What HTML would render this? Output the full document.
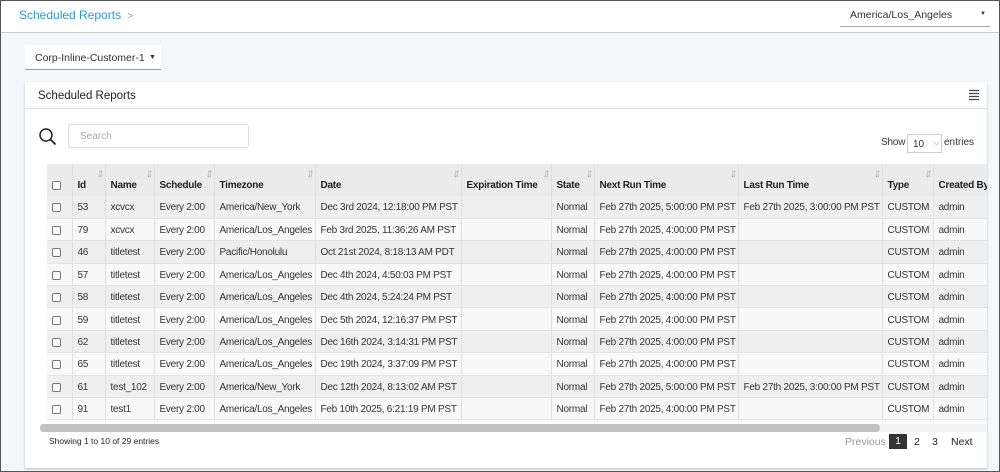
<!DOCTYPE html><html><head><style>
*{box-sizing:border-box;margin:0;padding:0}
body{width:1000px;height:472px;overflow:hidden;background:#f4f7fa;font-family:"Liberation Sans",sans-serif;font-size:11px;color:#333;position:relative}
.frame{position:absolute;inset:0;border:1px solid #555;pointer-events:none;z-index:9}
.top{position:absolute;left:0;top:0;width:1000px;height:33px;background:#fff;border-bottom:1px solid #ccc}
.a{position:absolute}
.card{position:absolute;left:25px;top:82px;width:962px;height:386px;background:#fff;box-shadow:0 1px 2px rgba(0,0,0,.25)}
table{border-collapse:collapse;position:absolute;left:22px;top:82px;table-layout:fixed;width:946px}
td,th{height:22.4px;padding:2px 4px 0 5px;white-space:nowrap;overflow:hidden;border-right:1px solid #e0e0e0;font-size:10px;letter-spacing:-0.25px;text-align:left;color:#333}
th{height:32px;background:#ebebeb;font-weight:bold;vertical-align:bottom;padding-bottom:5px;position:relative;color:#222}
th .s{position:absolute;right:4px;top:2px;color:#aaa;font-weight:normal;font-size:12px;letter-spacing:-4px}
tr:nth-child(even) td{background:#efefef}
tr:nth-child(odd) td{background:#f9f9f9}
td{border-bottom:1px solid #e3e3e3}
.cb{display:inline-block;width:9px;height:9px;border:1px solid #777;border-radius:2px;background:#fff;vertical-align:middle}
</style></head><body>
<div class="frame"></div>
<div class="top">
<div class="a" style="left:19px;top:8px;font-size:12px;color:#2a9ae0">Scheduled Reports <span style="color:#999;font-size:10px;margin-left:3px">&gt;</span></div>
<div class="a" style="left:840px;top:0;width:150px;height:27px;border-bottom:1px solid #aaa"><span class="a" style="left:10px;top:9px;font-size:10.5px">America/Los_Angeles</span><span class="a" style="left:140px;top:11px;font-size:6px">▼</span></div>
</div>
<div class="a" style="left:25px;top:45px;width:136px;height:25px;background:#fff;border-bottom:1px solid #999"><span class="a" style="left:10px;top:7px;font-size:10.5px">Corp-Inline-Customer-1</span><span class="a" style="left:124px;top:9px;font-size:7px">▼</span></div>
<div class="card">
<div class="a" style="left:0;top:0;width:962px;height:27px;border-bottom:1px solid #ddd"><span class="a" style="left:13px;top:8px;font-size:11.5px;color:#222">Scheduled Reports</span>
<svg class="a" style="left:943px;top:7px" width="12" height="12"><path d="M1 1.5h10M1 4.5h10M1 7.5h10M1 10.5h10" stroke="#444" stroke-width="1.2"/></svg></div>
<svg class="a" style="left:13px;top:45px" width="20" height="20"><circle cx="8" cy="8" r="6" fill="none" stroke="#222" stroke-width="1.5"/><path d="M12.5 12.5l5 5" stroke="#222" stroke-width="1.7"/></svg>
<div class="a" style="left:43px;top:42px;width:181px;height:24px;border:1px solid #ddd;border-radius:3px"><span class="a" style="left:11px;top:6px;color:#aaa;font-size:10px">Search</span></div>
<div class="a" style="left:856px;top:55px;font-size:10px;letter-spacing:-0.2px">Show</div>
<div class="a" style="left:882px;top:52px;width:35px;height:19px;border:1px solid #ccc;font-size:10px;background:#fff"><span class="a" style="left:5px;top:4px">10</span><span class="a" style="left:25px;top:2px;color:#888;font-size:9px">⌵</span></div>
<div class="a" style="left:919px;top:55px;font-size:10px">entries</div>
<div class="a" style="left:22px;top:82px;width:940px;height:260px;overflow:hidden">
<table style="left:0;top:0">
<colgroup><col style="width:25px"><col style="width:33px"><col style="width:49px"><col style="width:60px"><col style="width:101px"><col style="width:146px"><col style="width:90px"><col style="width:43px"><col style="width:144px"><col style="width:144px"><col style="width:51px"><col style="width:60px"></colgroup>
<tr><th><span class="cb"></span></th><th>Id<span class="s">↓↑</span></th><th>Name<span class="s">↓↑</span></th><th>Schedule<span class="s">↓↑</span></th><th>Timezone<span class="s">↓↑</span></th><th>Date<span class="s">↓↑</span></th><th>Expiration Time<span class="s">↓↑</span></th><th>State<span class="s">↓↑</span></th><th>Next Run Time<span class="s">↓↑</span></th><th>Last Run Time<span class="s">↓↑</span></th><th>Type<span class="s">↓↑</span></th><th>Created By</th></tr>
<tr><td><span class="cb"></span></td><td>53</td><td>xcvcx</td><td>Every 2:00</td><td>America/New_York</td><td>Dec 3rd 2024, 12:18:00 PM PST</td><td></td><td>Normal</td><td>Feb 27th 2025, 5:00:00 PM PST</td><td>Feb 27th 2025, 3:00:00 PM PST</td><td>CUSTOM</td><td>admin</td></tr>
<tr><td><span class="cb"></span></td><td>79</td><td>xcvcx</td><td>Every 2:00</td><td>America/Los_Angeles</td><td>Feb 3rd 2025, 11:36:26 AM PST</td><td></td><td>Normal</td><td>Feb 27th 2025, 4:00:00 PM PST</td><td></td><td>CUSTOM</td><td>admin</td></tr>
<tr><td><span class="cb"></span></td><td>46</td><td>titletest</td><td>Every 2:00</td><td>Pacific/Honolulu</td><td>Oct 21st 2024, 8:18:13 AM PDT</td><td></td><td>Normal</td><td>Feb 27th 2025, 4:00:00 PM PST</td><td></td><td>CUSTOM</td><td>admin</td></tr>
<tr><td><span class="cb"></span></td><td>57</td><td>titletest</td><td>Every 2:00</td><td>America/Los_Angeles</td><td>Dec 4th 2024, 4:50:03 PM PST</td><td></td><td>Normal</td><td>Feb 27th 2025, 4:00:00 PM PST</td><td></td><td>CUSTOM</td><td>admin</td></tr>
<tr><td><span class="cb"></span></td><td>58</td><td>titletest</td><td>Every 2:00</td><td>America/Los_Angeles</td><td>Dec 4th 2024, 5:24:24 PM PST</td><td></td><td>Normal</td><td>Feb 27th 2025, 4:00:00 PM PST</td><td></td><td>CUSTOM</td><td>admin</td></tr>
<tr><td><span class="cb"></span></td><td>59</td><td>titletest</td><td>Every 2:00</td><td>America/Los_Angeles</td><td>Dec 5th 2024, 12:16:37 PM PST</td><td></td><td>Normal</td><td>Feb 27th 2025, 4:00:00 PM PST</td><td></td><td>CUSTOM</td><td>admin</td></tr>
<tr><td><span class="cb"></span></td><td>62</td><td>titletest</td><td>Every 2:00</td><td>America/Los_Angeles</td><td>Dec 16th 2024, 3:14:31 PM PST</td><td></td><td>Normal</td><td>Feb 27th 2025, 4:00:00 PM PST</td><td></td><td>CUSTOM</td><td>admin</td></tr>
<tr><td><span class="cb"></span></td><td>65</td><td>titletest</td><td>Every 2:00</td><td>America/Los_Angeles</td><td>Dec 19th 2024, 3:37:09 PM PST</td><td></td><td>Normal</td><td>Feb 27th 2025, 4:00:00 PM PST</td><td></td><td>CUSTOM</td><td>admin</td></tr>
<tr><td><span class="cb"></span></td><td>61</td><td>test_102</td><td>Every 2:00</td><td>America/New_York</td><td>Dec 12th 2024, 8:13:02 AM PST</td><td></td><td>Normal</td><td>Feb 27th 2025, 5:00:00 PM PST</td><td>Feb 27th 2025, 3:00:00 PM PST</td><td>CUSTOM</td><td>admin</td></tr>
<tr><td><span class="cb"></span></td><td>91</td><td>test1</td><td>Every 2:00</td><td>America/Los_Angeles</td><td>Feb 10th 2025, 6:21:19 PM PST</td><td></td><td>Normal</td><td>Feb 27th 2025, 4:00:00 PM PST</td><td></td><td>CUSTOM</td><td>admin</td></tr>
</table></div>
<div class="a" style="left:15px;top:342px;width:947px;height:8px;background:#f1f1f1"></div>
<div class="a" style="left:15px;top:342px;width:840px;height:8px;background:#c1c1c1;border-radius:4px"></div>
<div class="a" style="left:24px;top:354px;font-size:8.5px;color:#222">Showing 1 to 10 of 29 entries</div>
<div class="a" style="left:820px;top:354px;font-size:10.5px;color:#999">Previous</div>
<div class="a" style="left:864px;top:352px;width:18px;height:15px;background:#333;color:#fff;font-size:10.5px;text-align:center;line-height:15px">1</div>
<div class="a" style="left:889px;top:354px;font-size:10.5px;color:#222">2</div>
<div class="a" style="left:907px;top:354px;font-size:10.5px;color:#222">3</div>
<div class="a" style="left:926px;top:354px;font-size:10.5px;color:#222">Next</div>
</div>
</body></html>
